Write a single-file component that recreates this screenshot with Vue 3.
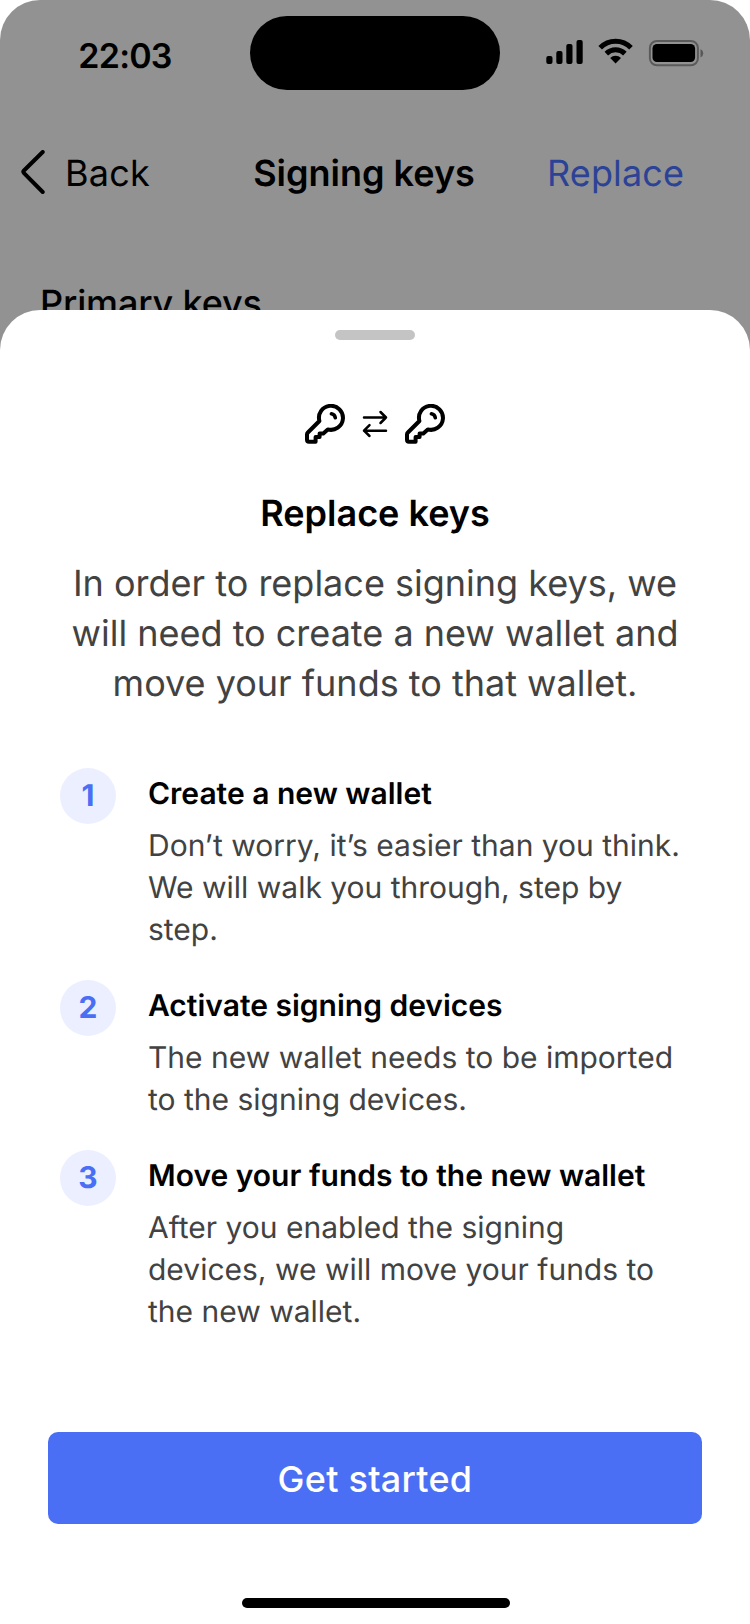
<script setup>
const steps = [
  {
    title: 'Create a new wallet',
    body: 'Don’t worry, it’s easier than you think. We will walk you through, step by step.',
  },
  {
    title: 'Activate signing devices',
    body: 'The new wallet needs to be imported to the signing devices.',
  },
  {
    title: 'Move your funds to the new wallet',
    body: 'After you enabled the signing devices, we will move your funds to the new wallet.',
  },
]
</script>

<template>
  <div class="phone">
    <div class="status">
      <span class="time">22:03</span>
      <div class="island"></div>
      <svg class="indicators" width="160" height="30" viewBox="0 0 160 30">
        <rect x="0.3" y="18" width="6.2" height="8" rx="2" />
        <rect x="10.3" y="13" width="6.2" height="13" rx="2" />
        <rect x="20.3" y="6" width="6.2" height="20" rx="2" />
        <rect x="30.5" y="2" width="6.2" height="24" rx="2" />
        <g fill="none" stroke="#000" stroke-width="5">
          <path d="M54.2 9.7 A21.5 21.5 0 0 1 85 9.7" />
          <path d="M60.3 15.6 A13.3 13.3 0 0 1 78.9 15.6" />
        </g>
        <path d="M64.2 19.9 A8 8 0 0 1 75 19.9 L69.6 25.4 Z" />
        <rect x="103.9" y="2.9" width="48" height="24.4" rx="7" fill="none" stroke="#000" stroke-opacity=".38" stroke-width="2" />
        <rect x="106.5" y="6" width="42.6" height="18" rx="4.5" />
        <path d="M154.5 11 A4.6 4.6 0 0 1 154.5 19.4 Z" fill-opacity=".4" />
      </svg>
    </div>
    <nav class="nav">
      <a class="back">
        <svg width="25" height="46" viewBox="0 0 25 46">
          <path d="M22.7 2 L4 20.5 Q2.7 21.8 4 23.1 L22.7 42" fill="none" stroke="#000" stroke-width="4" stroke-linecap="round" />
        </svg>
        <span>Back</span>
      </a>
      <h1>Signing keys</h1>
      <a class="replace">Replace</a>
    </nav>
    <h2 class="section">Primary keys</h2>

    <section class="sheet">
      <div class="grabber"></div>
      <div class="swap">
        <svg v-for="n in 2" :key="n" :class="'key' + n" width="40" height="40" viewBox="0 0 40 40" fill="none" stroke="#000" stroke-width="4" stroke-linejoin="round" stroke-linecap="round">
          <path d="M14.4 17 A12 12 0 1 1 22.8 25.4 L18.3 29.4 H14.6 V33 H10.6 V37.8 H4 Q2 37.8 2 35.8 V30.6 Q2 29.4 2.9 28.5 Z" />
          <path d="M26.4 9.8 Q29.8 10.4 30.3 13.8" stroke-width="3.6" />
        </svg>
        <svg class="arrows" width="26" height="28" viewBox="0 0 26 28" fill="none" stroke="#000" stroke-width="2.5" stroke-linecap="round" stroke-linejoin="round">
          <path d="M2 7.5 H24 M18.5 2 L24 7.5 L18.5 13" />
          <path d="M24 20.7 H2 M7.5 15.2 L2 20.7 L7.5 26" />
        </svg>
      </div>
      <h2 class="title">Replace keys</h2>
      <p class="lead">In order to replace signing keys, we will need to create a new wallet and move your funds to that wallet.</p>
      <ol class="steps">
        <li v-for="(step, i) in steps" :key="step.title">
          <span class="badge">{{ i + 1 }}</span>
          <div class="text">
            <h3>{{ step.title }}</h3>
            <p>{{ step.body }}</p>
          </div>
        </li>
      </ol>
      <button class="cta">Get started</button>
      <div class="home"></div>
    </section>
  </div>
</template>

<style>
body {
  background: #fff;
}
</style>

<style scoped>
* {
  box-sizing: border-box;
  margin: 0;
  padding: 0;
}
.phone {
  width: 750px;
  height: 1624px;
  overflow: hidden;
  display: flex;
  flex-direction: column;
  border-radius: 40px 40px 0 0;
  background: linear-gradient(#929292 0 400px, #fff 400px);
  font-family: Inter, sans-serif;
  text-rendering: geometricPrecision;
  color: #000;
}
.status {
  flex: none;
  height: 90px;
  padding-top: 16px;
  display: grid;
  grid-template-columns: 250px 250px 250px;
}
.time {
  padding-top: 20px;
  text-align: center;
  font-size: 34px;
  line-height: 42px;
  font-weight: 600;
  letter-spacing: -0.8px;
}
.island {
  height: 74px;
  border-radius: 37px;
  background: #000;
}
.indicators {
  margin: 22px 0 0 46px;
}
.nav {
  flex: none;
  height: 100px;
  margin-top: 33px;
  display: grid;
  grid-template-columns: 230px 268px 1fr;
  align-items: center;
  font-size: 36px;
  line-height: 50px;
}
.back {
  display: flex;
  align-items: center;
  gap: 20px;
  padding-left: 20px;
  letter-spacing: 0.2px;
}
h1 {
  text-align: center;
  font-size: 36px;
  font-weight: 600;
}
.replace {
  padding-left: 49px;
  color: #2c4296;
  letter-spacing: 0.15px;
}
.section {
  flex: none;
  height: 87px;
  padding: 55px 0 0 40px;
  font-size: 36px;
  line-height: 50px;
  font-weight: 500;
  letter-spacing: -0.15px;
}
.sheet {
  position: relative;
  flex: 1;
  display: flex;
  flex-direction: column;
  align-items: center;
  padding-top: 20px;
  border-radius: 40px 40px 0 0;
  background: #fff;
}
.grabber {
  width: 80px;
  height: 10px;
  border-radius: 5px;
  background: #c4c4c4;
}
.swap {
  height: 40px;
  margin-top: 64px;
  display: flex;
  align-items: center;
  gap: 17px;
}
.arrows {
  order: 1;
}
.key2 {
  order: 2;
}
.title {
  margin-top: 44px;
  font-size: 36px;
  line-height: 50px;
  font-weight: 600;
}
.lead {
  width: 640px;
  margin-top: 20px;
  text-align: center;
  font-size: 36px;
  line-height: 50px;
  color: #424242;
}
.steps {
  width: 630px;
  margin-top: 60px;
  display: flex;
  flex-direction: column;
  gap: 29px;
  list-style: none;
}
.steps li {
  display: flex;
  gap: 32px;
}
.badge {
  flex: none;
  width: 56px;
  height: 56px;
  border-radius: 50%;
  background: #ebefff;
  color: #4a6ff5;
  text-align: center;
  font-size: 30px;
  line-height: 56px;
  font-weight: 700;
}
.text {
  flex: 1;
  padding-top: 5px;
  font-size: 30px;
  line-height: 42px;
}
.text h3 {
  font-size: 30px;
  font-weight: 600;
}
.text p {
  margin-top: 10px;
  color: #424242;
}
.cta {
  width: 654px;
  height: 92px;
  margin-top: 99px;
  padding-top: 2px;
  border: 0;
  border-radius: 10px;
  background: #4a6ff5;
  color: #fff;
  font: 500 36px/50px Inter, sans-serif;
  letter-spacing: 0.25px;
}
.home {
  width: 268px;
  height: 10px;
  margin: 74px 0 0 2px;
  border-radius: 5px;
  background: #000;
}
</style>
